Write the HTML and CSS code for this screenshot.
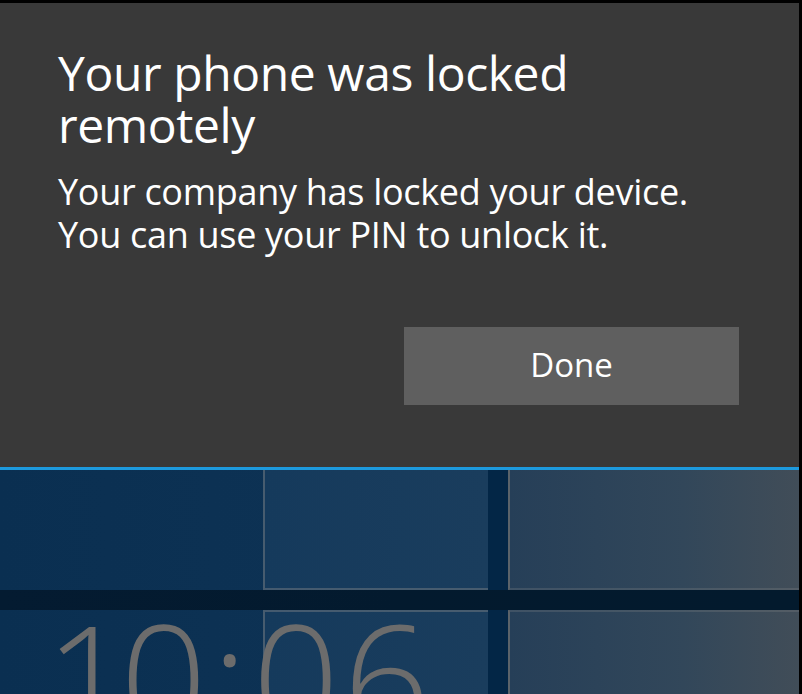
FILE: index.html
```html
<!DOCTYPE html>
<html>
<head>
<meta charset="utf-8">
<link rel="stylesheet" href="styles.css">
</head>
<body>
<div class="screen">
  <section class="dialog">
    <h1 class="title">Your phone was locked remotely</h1>
    <p class="message">Your company has locked your device.<br>You can use your PIN to unlock it.</p>
    <div class="actions">
      <button class="btn">Done</button>
    </div>
  </section>
  <div class="accent"></div>
  <div class="wallpaper">
    <div class="panes">
      <div class="p p-left-top"></div>
      <div class="p pane p-a"></div>
      <div class="p mull-v"></div>
      <div class="p pane p-b"></div>
      <div class="p band"></div>
      <div class="p p-left-bot"></div>
      <div class="p pane p-c"></div>
      <div class="p mull-v2"></div>
      <div class="p pane p-d"></div>
    </div>
    <div class="clock">10:06</div>
  </div>
</div>
</body>
</html>
```

FILE: styles.css
```css
html, body {
  margin: 0;
  padding: 0;
  background: #000;
  width: 802px;
  height: 694px;
  overflow: hidden;
}
.screen {
  width: 799px;
  height: 691px;
  margin-top: 3px;
  display: flex;
  flex-direction: column;
  background: #393939;
  overflow: hidden;
}
.dialog {
  background: #393939;
  height: 464px;
  box-sizing: border-box;
  padding: 44px 0 0 58px;
  color: #fff;
  font-family: "Open Sans", "Noto Sans", sans-serif;
  flex: none;
}
.title {
  margin: 0;
  font-weight: 400;
  font-size: 48px;
  line-height: 52px;
  width: 600px;
  letter-spacing: -0.4px;
}
.message {
  margin: 19px 0 0 0;
  font-size: 36px;
  line-height: 43px;
  letter-spacing: -0.3px;
}
.actions {
  display: flex;
  justify-content: flex-end;
  padding-right: 60px;
  margin-top: 71px;
}
.btn {
  width: 335px;
  height: 78px;
  background: #5f5f5f;
  border: none;
  color: #fff;
  font-family: "Open Sans", "Noto Sans", sans-serif;
  font-size: 33px;
  padding: 0 0 4px 0;
}
.accent {
  height: 3px;
  background: #1d9ade;
  flex: none;
}
.wallpaper {
  position: relative;
  flex: 1;
  background: linear-gradient(90deg, #0a2f51 0%, #0d3254 40%, #2b4459 75%, #3f4c57 100%);
  overflow: hidden;
}
.panes {
  display: grid;
  grid-template-columns: 263px 225px 20px 1fr;
  grid-template-rows: 120px 20px 1fr;
  height: 100%;
}
.p-left-top { grid-column: 1; grid-row: 1; }
.p-left-bot { grid-column: 1; grid-row: 3; }
.pane {
  box-sizing: border-box;
}
.p-a {
  grid-column: 2; grid-row: 1;
  border-left: 2px solid rgba(140,140,140,0.4);
  border-bottom: 2px solid rgba(140,140,140,0.4);
  background: linear-gradient(90deg, #153a5c, #1a3d5d);
}
.p-b {
  grid-column: 4; grid-row: 1;
  border-left: 2px solid rgba(140,140,140,0.35);
  border-bottom: 2px solid rgba(140,140,140,0.25);
  background: linear-gradient(90deg, #263f58, #32475a 60%, #414d58);
}
.p-c {
  grid-column: 2; grid-row: 3;
  border-left: 2px solid rgba(140,140,140,0.4);
  border-top: 2px solid rgba(140,140,140,0.4);
  background: linear-gradient(90deg, #153a5c, #1a3d5d);
}
.p-d {
  grid-column: 4; grid-row: 3;
  border-left: 2px solid rgba(140,140,140,0.35);
  border-top: 2px solid rgba(140,140,140,0.25);
  background: linear-gradient(90deg, #263f58, #32475a 60%, #414d58);
}
.mull-v { grid-column: 3; grid-row: 1; background: #032646; }
.mull-v2 { grid-column: 3; grid-row: 3; background: #032646; }
.band {
  grid-column: 1 / -1;
  grid-row: 2;
  background: linear-gradient(90deg, #041b31, #031a2e 50%, #031a2d);
}
.clock {
  position: absolute;
  left: 56px;
  top: 131px;
  font-family: "Open Sans", "Noto Sans", sans-serif;
  font-weight: 300;
  font-size: 152px;
  line-height: 1;
  color: #6c6c6c;
  letter-spacing: 4px;
  font-variant-numeric: proportional-nums;
}
```
